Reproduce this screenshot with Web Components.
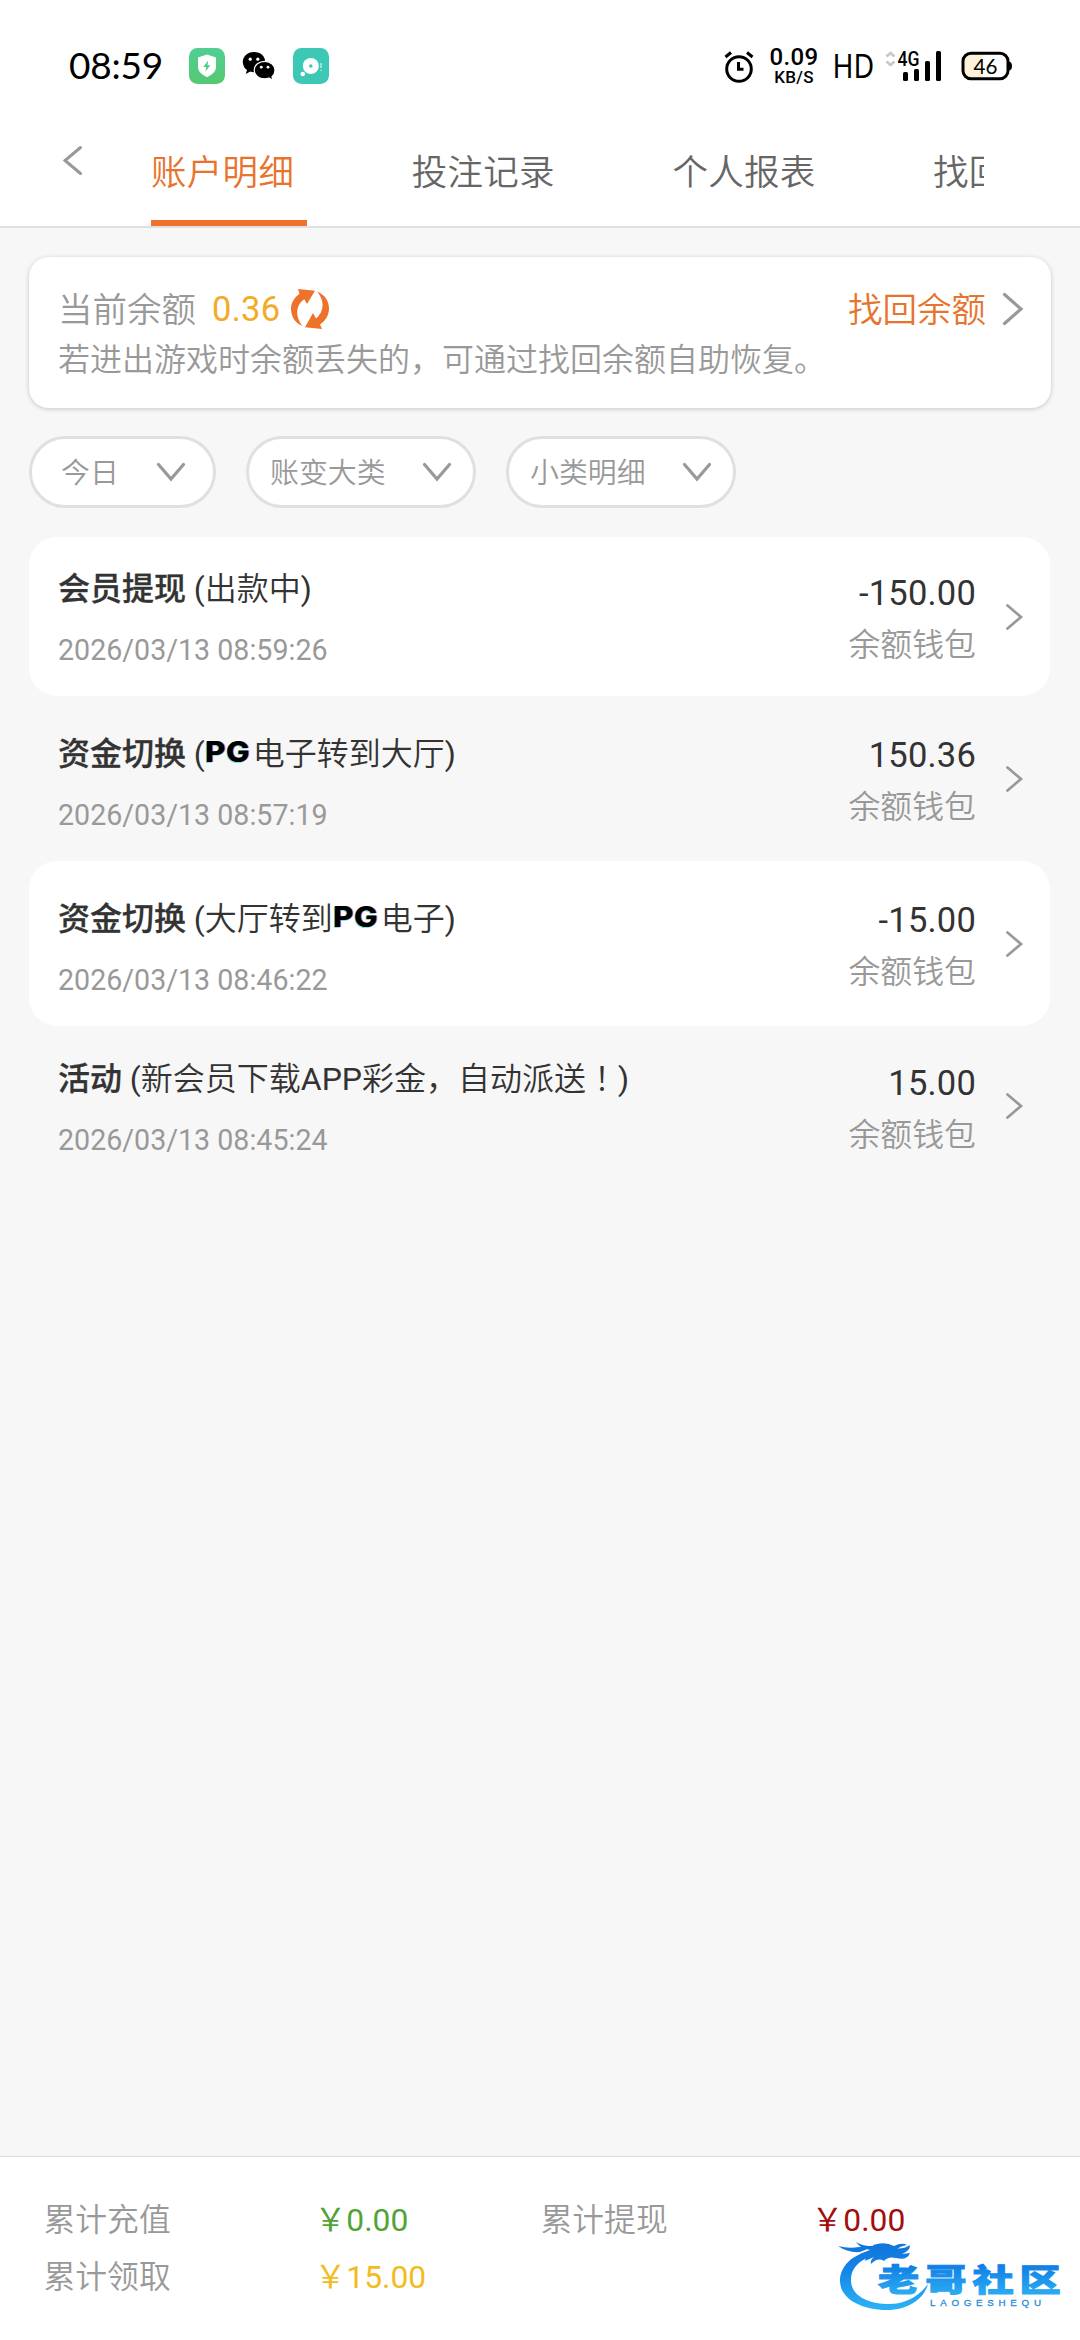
<!DOCTYPE html>
<html lang="zh-CN">
<head>
<meta charset="utf-8">
<title>账户明细</title>
<style>
html,body{margin:0;padding:0}
body{width:1080px;height:2340px;overflow:hidden;background:#f7f7f7;font-family:Roboto,"Noto Sans CJK SC",sans-serif;font-weight:350;color:#333}
</style>
</head>
<body>
<account-page></account-page>
<script>
function define(name, html, setup) {
  const tpl = document.createElement('template');
  tpl.innerHTML = html;
  customElements.define(name, class extends HTMLElement {
    connectedCallback() {
      if (this.shadowRoot) return;
      const root = this.attachShadow({ mode: 'open' });
      root.appendChild(tpl.content.cloneNode(true));
      if (setup) setup(this, root);
    }
  });
}

// direction: left | right | down, size by width and height attributes
define('chevron-icon', `<style>:host{display:block;flex:none;line-height:0}svg{display:block;overflow:visible}</style><svg fill="none" stroke-linecap="round" stroke-linejoin="miter"><path/></svg>`, (el, root) => {
  const w = +el.getAttribute('w'), h = +el.getAttribute('h'), d = el.getAttribute('dir');
  const svg = root.querySelector('svg'), p = root.querySelector('path');
  svg.setAttribute('width', w); svg.setAttribute('height', h);
  svg.setAttribute('stroke', el.getAttribute('color') || '#999');
  svg.setAttribute('stroke-width', el.getAttribute('stroke') || 3);
  const a = 1.5;
  p.setAttribute('d', d === 'left' ? `M${w-a} ${a}L2 ${h/2}L${w-a} ${h-a}` :
    d === 'right' ? `M${a} ${a}L${w-2} ${h/2}L${a} ${h-a}` : `M${a} ${a}L${w/2} ${h-2}L${w-a} ${a}`);
});

define('status-bar', `<style>
:host{display:flex;height:88px;box-sizing:border-box;padding:0 68px 0 69px;align-items:flex-start;justify-content:space-between;background:#fff;color:#000}
.g{display:flex;align-items:flex-start}
svg{display:block;flex:none;overflow:visible}
.time{font:400 37px/44px Lato,sans-serif;width:120px;margin-top:43px;white-space:nowrap;letter-spacing:-.2px}
.net{display:flex;flex-direction:column;align-items:center;width:50px;margin:46px 0 0 15px;font-weight:500}
.net b{font:500 24px/22px Roboto;letter-spacing:.3px}
.net i{font:500 17px/18px Roboto;letter-spacing:.3px}
.hd{font:400 33px/40px "Noto Sans",sans-serif;width:37px;margin:46px 0 0 16px;display:flex;justify-content:center}
.hd span{transform:scaleX(.86)}
.sig{margin:49px 0 0 13px}
.bat{margin:51px 0 0 18px}
</style>
<div class="g"><span class="time">08:59</span>
<svg style="margin-top:48px" width="36" height="36" viewBox="0 0 36 36"><defs><linearGradient id="a" x2="0" y2="1"><stop stop-color="#50cf93"/><stop offset="1" stop-color="#55c971"/></linearGradient></defs><rect width="36" height="36" rx="8.500" fill="url(#a)"/><path d="M18 6.500L27 9.500V20Q26 25.500 18 29.200Q10 25.500 9 20V9.500Z" fill="#fff"/><path d="M19.200 12.500L14.300 19H17.300L16.500 23.500L21.300 17.200H18.500Z" fill="#50cb82"/></svg>
<svg style="margin:51px 0 0 17px" width="34" height="31" viewBox="0 0 34 31"><path d="M12 1C5.300 1 .800 5.600.800 11Q.900 16 5 19L3.800 23L8.300 20.600Q10 21.200 12 21.200C18 21.200 23.200 17 23.200 11S18.600 1 12 1Z"/><path d="M23 10.300C17 10.300 12.200 14.100 12.200 19.200S17 27.800 22.500 27.800Q25 27.800 27 27L30.800 29.200L30 25.700Q33 23 33 19.200C33 14.500 28.700 10.300 23 10.300Z" stroke="#fff" stroke-width="1.200"/><g fill="#fff"><circle cx="8.200" cy="8.200" r="1.600"/><circle cx="15.800" cy="8.200" r="1.600"/><circle cx="19.300" cy="16.200" r="1.400"/><circle cx="26" cy="16.200" r="1.400"/></g></svg>
<svg style="margin:48px 0 0 17px" width="36" height="36" viewBox="0 0 36 36"><rect width="36" height="36" rx="8.500" fill="#3dc7b5"/><circle cx="17.800" cy="18" r="8" fill="#fff"/><circle cx="9.800" cy="26" r="2.300" fill="#fff"/><circle cx="17.800" cy="18" r="1.800" fill="#3dc7b5"/><path d="M28 15V20M28 21.700V23" stroke="#b9ebe4" stroke-width="1.500"/></svg></div>
<div class="g">
<svg style="margin-top:51px" width="30" height="32" viewBox="0 0 30 32" fill="none" stroke="#000"><circle cx="15" cy="18" r="12.300" stroke-width="3"/><path d="M1.500 6L7 1.500M28.500 6L23 1.500M14.500 11V18.200H19.500" stroke-width="3"/></svg>
<div class="net"><b>0.09</b><i>KB/S</i></div>
<div class="hd"><span>HD</span></div>
<svg class="sig" width="58" height="34" viewBox="0 0 58 34"><path d="M1.500 7.500L5.500 4L9.500 7.500M1.500 12.500L5.500 16L9.500 12.500" fill="none" stroke="#c8c8c8" stroke-width="2.800"/><text x="12.500" y="17" font-family="Roboto" font-size="21" font-weight="500" textLength="22" lengthAdjust="spacingAndGlyphs">4G</text><g><rect x="18" y="23" width="5" height="9" rx="1.500"/><rect x="29" y="20" width="5" height="12" rx="1.500"/><rect x="40" y="12" width="5" height="20" rx="1.500"/><rect x="51" y="2" width="5" height="30" rx="1.500"/></g></svg>
<svg class="bat" width="51" height="30" viewBox="0 0 51 30"><path d="M9 3H22V27H9Q3 26 3 19V11Q3 4 9 3Z" fill="#fff2da"/><rect x="2" y="2.300" width="45" height="25.400" rx="8" fill="none" stroke="#000" stroke-width="3"/><path d="M48 10.500Q51 11 51 15T48 19.500Z"/><text x="12.500" y="22.500" font-family="Lato" font-size="21.500" font-weight="400" textLength="24" lengthAdjust="spacingAndGlyphs">46</text></svg>
</div>`);

define('tab-item', `<style>
:host{display:flex;flex-direction:column;justify-content:space-between;flex:none;width:156px;height:100%;margin-right:104.700px;color:#666;font-size:35.500px;letter-spacing:.300px;white-space:nowrap}
span{line-height:44px;padding-top:63px}
i{height:6px}
:host([active]){color:#e8732c}
:host([active]) i{background:#ee7229}
</style><span><slot></slot></span><i></i>`);

define('tab-bar', `<style>
:host{display:flex;height:140px;box-sizing:border-box;border-bottom:2px solid #e0e0e0;background:#fff;padding-left:63px}
chevron-icon{margin:58px 69px 0 0}
.tabs{display:flex;width:833px;overflow:hidden}
</style><chevron-icon dir="left" w="19" h="29"></chevron-icon>
<div class="tabs"><tab-item active>账户明细</tab-item><tab-item>投注记录</tab-item><tab-item>个人报表</tab-item><tab-item>找回余额</tab-item></div>`);

define('balance-card', `<style>
:host{display:flex;flex-direction:column;height:151px;box-sizing:border-box;margin:29px 29px 0;padding:28px 28px 0 29px;border-radius:20px;background:#fff;box-shadow:0 1px 5px rgba(0,0,0,.2);color:#999}
.top{display:flex;align-items:center;height:48px;font-size:34.500px;line-height:48px}
.top span:not(.v){padding-top:1px}
.v{color:#f2ac29;margin-left:16px;letter-spacing:.300px;font-weight:400}
svg{display:block;margin-left:10px}
.link{color:#e8732c;margin-left:auto;margin-right:17px}
.note{font-size:32px;line-height:44px;margin-top:5px;white-space:nowrap}
</style>
<div class="top"><span>当前余额</span><span class="v">0.36</span>
<svg width="40" height="42" viewBox="0 0 40 42" fill="#ee7229"><path d="M8 1L25 2.800L17 16L14.300 11.300C7 16 3.800 27 12.500 38C4 34.500 1 27 1 20.500C1 15 4.500 9.500 9.500 5.800Z"/><path d="M27 3.500C35.500 7 39 13.500 39 20.500C39 27 35.500 33 30 36.500L32 41L15 39.200L23 25L26 30.500C33 25 36 14 27 3.500Z"/></svg>
<span class="link">找回余额</span><chevron-icon dir="right" w="20" h="32" stroke="3.200"></chevron-icon></div>
<div class="note">若进出游戏时余额丢失的，可通过找回余额自助恢复。</div>`);

define('filter-pill', `<style>
:host{display:flex;align-items:center;justify-content:space-between;height:72px;box-sizing:border-box;border:3px solid #e0e0e0;border-radius:36px;background:#fff;color:#999;font-size:28.900px;line-height:40px;padding:0 22px 0 21px;width:230px;white-space:nowrap}
:host([short]){width:187px;padding:0 28px 0 29px}
span{padding-top:2px}
</style><span><slot></slot></span><chevron-icon dir="down" w="28" h="18" stroke="3.200"></chevron-icon>`);

define('filter-bar', `<style>:host{display:flex;gap:30px;margin:28px 29px 29px}</style>
<filter-pill short>今日</filter-pill><filter-pill>账变大类</filter-pill><filter-pill>小类明细</filter-pill>`);

define('pg-mark', `<style>
:host{display:inline-flex;width:48px;height:44px;vertical-align:top}
span{font:800 28px/41px Inter,sans-serif;color:#000;transform:scaleX(1.120);transform-origin:0 50%;letter-spacing:.5px;text-shadow:-1px 1px 0 #36d9e8aa,1px 0 0 #f03c7099}
</style><span>PG</span>`);

define('record-row', `<style>
:host{display:flex;align-items:stretch;justify-content:space-between;margin:0 30px 0 29px;padding:0 27px 0 29px;border-radius:28px}
:host([filled]){background:#fff}
.l{display:flex;flex-direction:column;padding:29px 0}
.t{font-size:32px;line-height:44px;height:44px;white-space:nowrap;padding-top:1px;margin-bottom:-1px}
:host([tall]) .t{padding-top:7px}
:host([raised]) .t{margin-top:-2px;padding-top:1px;margin-bottom:2px}
.t b{font-weight:500;-webkit-text-stroke:.3px currentColor}
.d{font-size:28.600px;line-height:34px;margin-top:23px;color:#999;font-weight:400}
.r{display:flex;align-items:center;gap:30px}
.a{display:flex;flex-direction:column;align-items:flex-end;padding-top:3px}
.m{font-size:34.500px;line-height:50px;letter-spacing:.200px;font-weight:400}
.w{font-size:31.900px;line-height:50px;color:#999;padding-top:2px;margin-bottom:-2px}
</style>
<div class="l"><div class="t"><b></b> <slot></slot></div><div class="d"></div></div>
<div class="r"><div class="a"><div class="m"></div><div class="w">余额钱包</div></div><chevron-icon dir="right" w="17" h="26" stroke="2.700"></chevron-icon></div>`, (el, root) => {
  root.querySelector('b').textContent = el.getAttribute('kind');
  root.querySelector('.d').textContent = el.getAttribute('date');
  root.querySelector('.m').textContent = el.getAttribute('amount');
});

define('site-logo', `<style>:host{display:block;position:absolute;left:836px;top:84px;width:228px;height:74px}svg{display:block;overflow:visible}</style>
<svg width="228" height="74" viewBox="0 0 228 74"><defs><linearGradient id="b" gradientUnits="userSpaceOnUse" x1="0" y1="0" x2="0" y2="72"><stop stop-color="#1272d8"/><stop offset=".4" stop-color="#1385ea"/><stop offset="1" stop-color="#2db7f5"/></linearGradient><linearGradient id="c" gradientUnits="userSpaceOnUse" x1="0" y1="22" x2="0" y2="52"><stop stop-color="#0f7be4"/><stop offset="1" stop-color="#28aaf3"/></linearGradient></defs>
<g fill="url(#b)"><path d="M34 10C15 14 4 26 4 40C4 57 24 69 51 69C72 69 88 58 92 43C82 57 66 64 50 63C30 62 15 54 15 39C15 26 25 17 42 14Z"/><path d="M2 5Q13 8 23 6Q29 4 34 7L24 11Q12 12 2 5Z"/><path d="M20 1Q30 7 41 4Q50 2 57 7Q67 9 74 4Q74 10 66 13L74 12Q71 20 60 17Q52 15 48 20Q42 16 35 23Q34 19 38 16L29 20Q32 13 24 13L34 9Q24 7 20 1Z"/><path d="M37 4Q49 0 58 5Q66 1 71 4Q64 5 60 9L40 8Z"/></g>
<g fill="url(#c)" stroke="url(#c)" stroke-width="1" font-family="Noto Sans CJK SC" font-size="31" font-weight="900" transform="translate(42 0) scale(1.330 1)"><text x="0" y="50" letter-spacing="4.500">老哥社区</text></g>
<text x="94" y="64.500" font-family="Liberation Sans" font-size="9.800" font-weight="400" fill="#278bd9" stroke="#278bd9" stroke-width=".3" textLength="111" lengthAdjust="spacing">LAOGESHEQU</text></svg>`);

define('totals-footer', `<style>
:host{display:grid;position:relative;grid-template-columns:271px 226px 271px auto;grid-template-rows:57px 57px;align-content:start;height:184px;box-sizing:border-box;border-top:1px solid #ddd;background:#fff;padding:35px 0 0 43.500px;margin-top:auto;font-size:31.800px;line-height:57px;color:#999;white-space:nowrap}
.g,.r,.y{font-weight:400}
.g{color:#52a336}.r{color:#a30d0d}.y{color:#f2bc20}
</style><span>累计充值</span><span class="g">￥0.00</span><span>累计提现</span><span class="r">￥0.00</span><span>累计领取</span><span class="y">￥15.00</span><site-logo></site-logo>`);

define('account-page', `<style>:host{display:flex;flex-direction:column;width:1080px;height:2340px;overflow:hidden}.c{font-family:"Noto Sans CJK TC",sans-serif}i{font-style:normal;font-weight:400}</style>
<status-bar></status-bar><tab-bar></tab-bar><balance-card></balance-card><filter-bar></filter-bar>
<record-row filled kind="会员提现" date="2026/03/13 08:59:26" amount="-150.00"><i>(</i>出款中<i>)</i></record-row>
<record-row tall kind="资金切换" date="2026/03/13 08:57:19" amount="150.36"><i>(</i><pg-mark></pg-mark>电子转到大厅<i>)</i></record-row>
<record-row filled tall kind="资金切换" date="2026/03/13 08:46:22" amount="-15.00"><i>(</i>大厅转到<pg-mark></pg-mark>电子<i>)</i></record-row>
<record-row raised kind="活动" date="2026/03/13 08:45:24" amount="15.00"><i>(</i>新会员下载<i>APP</i>彩金，自动派送<span class="c" lang="zh-TW">！</span><i>)</i></record-row>
<totals-footer></totals-footer>`);
</script>
</body>
</html>
